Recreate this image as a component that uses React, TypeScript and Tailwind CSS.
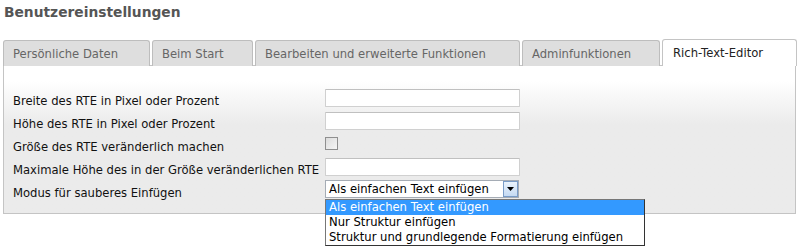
const tabs = [
  { label: 'Persönliche Daten', w: 'w-[147px]' },
  { label: 'Beim Start', w: 'w-[101px]' },
  { label: 'Bearbeiten und erweiterte Funktionen', w: 'w-[265px]' },
  { label: 'Adminfunktionen', w: 'w-[138px]' },
]

const rows = [
  'Breite des RTE in Pixel oder Prozent',
  'Höhe des RTE in Pixel oder Prozent',
  'Größe des RTE veränderlich machen',
  'Maximale Höhe des in der Größe veränderlichen RTE',
  'Modus für sauberes Einfügen',
]

export default function App() {
  return (
    <div className="w-[800px] h-[249px] bg-white text-[11.6px] text-[#222] font-['DejaVu_Sans',Verdana,sans-serif] overflow-hidden">
      <h1 className="px-[4px] pt-[2px] h-[39px] text-[13.8px] font-bold text-[#555]">Benutzereinstellungen</h1>

      {/* tab strip */}
      <div className="flex gap-[2px] pl-[3px] h-[27px] relative z-10">
        {tabs.map((t) => (
          <div
            key={t.label}
            className={`${t.w} h-[26px] mt-px border border-b-0 border-[#bdbdbd] rounded-t-[3px] bg-[#dedede] text-[#666] pl-[9px] leading-[26px]`}
          >
            {t.label}
          </div>
        ))}
        <div className="w-[135px] h-[27px] border border-b-0 border-[#c4c4c4] rounded-t-[3px] bg-white text-[#222] pl-[10px] leading-[27px]">
          Rich-Text-Editor
        </div>
      </div>

      {/* panel */}
      <div className="relative ml-[3px] w-[793px] h-[149px] -mt-px border border-[#c4c4c4] bg-gradient-to-b from-white from-10% to-[#ebebeb] to-40%">
        <div className="pt-[22px] pl-[9px] flex flex-col">
          {rows.map((r, i) => (
            <div key={r} className="flex items-start h-[23px]">
              <span className="w-[312px] mt-[6px] leading-[14px] text-[#111]">{r}</span>
              {i === 2 ? (
                <div className="mt-[3px] w-[13px] h-[13px] border border-[#8f8f8f] bg-gradient-to-br from-[#dcdcdc] to-[#f6f6f6]" />
              ) : i === 4 ? (
                <div className="flex w-[194px] h-[18px] border border-[#a5acb5] bg-white">
                  <span className="flex-1 pl-[3px] leading-[16px] text-black">Als einfachen Text einfügen</span>
                  <span className="w-[15px] h-[16px] border border-[#7a9cc8] bg-gradient-to-b from-[#eaf3fc] to-[#c5daf3] flex items-center justify-center">
                    <svg width="7" height="4" viewBox="0 0 7 4">
                      <path d="M0 0h7L3.5 4z" fill="#000" />
                    </svg>
                  </span>
                </div>
              ) : (
                <div className="mt-px w-[195px] h-[18px] border border-[#d0d0d0] border-t-[#c0c0c0] bg-white rounded-[1px]" />
              )}
            </div>
          ))}
        </div>

        {/* open select list */}
        <div className="absolute left-[321px] top-[133px] w-[320px] border border-[#333] border-t-[#777] border-l-[#777] bg-white text-black">
          <div className="h-[15px] leading-[15px] pl-[3px] bg-[#3399ff] text-white">Als einfachen Text einfügen</div>
          <div className="h-[15px] leading-[15px] pl-[3px]">Nur Struktur einfügen</div>
          <div className="h-[15px] leading-[15px] pl-[3px]">Struktur und grundlegende Formatierung einfügen</div>
        </div>
      </div>
    </div>
  )
}
